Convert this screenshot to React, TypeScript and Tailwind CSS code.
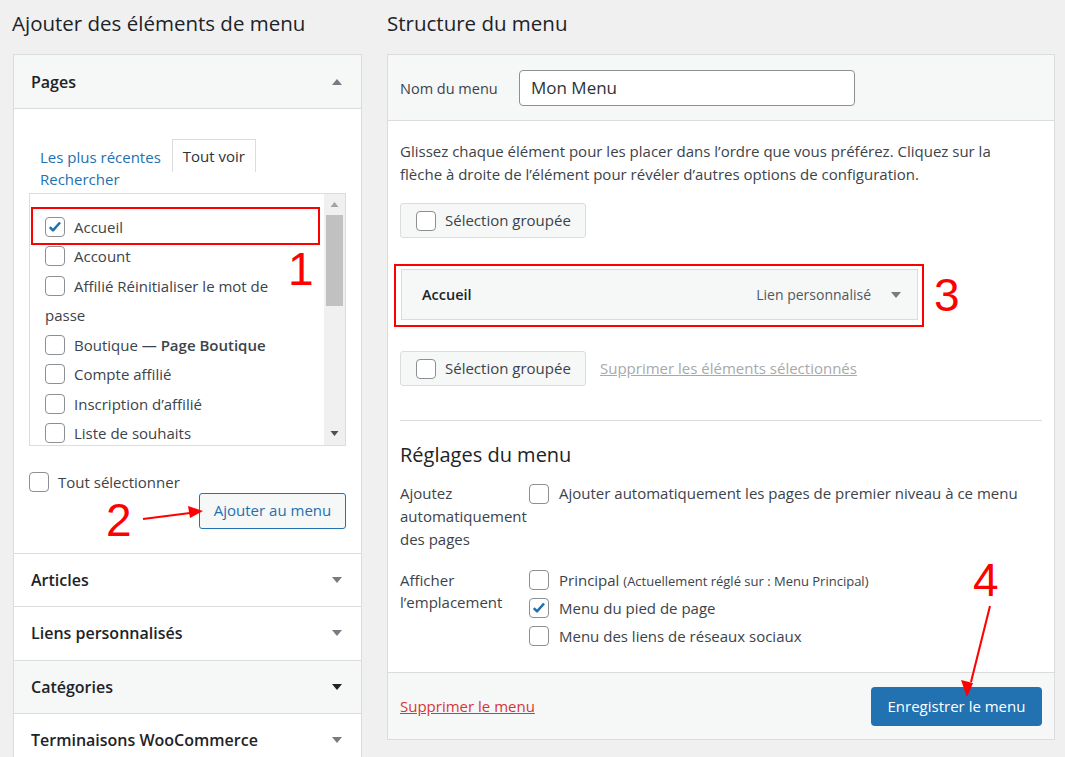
import React from 'react';

const Check = ({ checked = false }: { checked?: boolean }) => (
  <span className="inline-flex items-center justify-center w-[20px] h-[20px] shrink-0 rounded-[4px] border border-[#8c8f94] bg-white">
    {checked && (
      <svg viewBox="0 0 20 20" className="w-[18px] h-[18px]">
        <path d="M4.2 10.2l3.6 3.6L15.6 5" stroke="#2271b1" strokeWidth="2.8" fill="none" strokeLinejoin="round" />
      </svg>
    )}
  </span>
);

const Down = ({ dark = false }: { dark?: boolean }) => (
  <svg viewBox="0 0 10 6" className="w-[10px] h-[6px]">
    <path d="M0 0h10L5 6z" fill={dark ? '#1d2327' : '#787c82'} />
  </svg>
);

const pages = [
  { label: 'Accueil', checked: true },
  { label: 'Account' },
  { label: 'Affilié Réinitialiser le mot de', wrap: 'passe' },
  { label: 'Boutique — ', bold: 'Page Boutique' },
  { label: 'Compte affilié' },
  { label: 'Inscription d’affilié' },
  { label: 'Liste de souhaits' },
];

const sections = [
  { name: 'Articles' },
  { name: 'Liens personnalisés' },
  { name: 'Catégories', active: true },
  { name: 'Terminaisons WooCommerce' },
];

function AddItems() {
  return (
    <div className="w-[349px] shrink-0">
      <div className="h-[54px] pt-[8px] text-[20.5px] text-[#1d2327] -ml-[1px]">Ajouter des éléments de menu</div>
      <div className="border border-[#dcdcde] bg-white">
        <div className="h-[54px] flex items-center justify-between px-[17px] bg-[#f6f7f7] border-b border-[#dcdcde]">
          <span className="text-[16px] font-semibold text-[#1d2327]">Pages</span>
          <svg viewBox="0 0 10 6" className="w-[10px] h-[6px] mr-[2px]">
            <path d="M0 6h10L5 0z" fill="#787c82" />
          </svg>
        </div>
        <div className="px-[15px] pt-[30px] pb-[24px]">
          <div className="pl-[11px] text-[15px]">
            <div className="flex items-end h-[33px]">
              <span className="text-[#2271b1] mb-[4px] mr-[11px]">Les plus récentes</span>
              <span className="h-[33px] px-[10px] border border-b-0 border-[#dcdcde] flex items-center text-[#2c3338] bg-white">Tout voir</span>
            </div>
            <div className="text-[#2271b1] -mt-[4px] leading-[22px]">Rechercher</div>
          </div>
          <div className="relative mt-[3px] h-[253px] border border-[#dcdcde] flex overflow-hidden">
            <div className="flex-1 pl-[15px] pt-[18px] text-[15px] text-[#3c434a]">
              {pages.map((p) => (
                <div key={p.label}>
                  <div className="h-[29.5px] flex items-center gap-[9px] whitespace-nowrap">
                    <Check checked={p.checked} />
                    <span>
                      {p.label}
                      {p.bold && <span className="font-semibold">{p.bold}</span>}
                    </span>
                  </div>
                  {p.wrap && <div className="h-[29.5px] flex items-center">{p.wrap}</div>}
                </div>
              ))}
            </div>
            <div className="w-[21px] bg-[#f0f0f0] flex flex-col items-center">
              <svg viewBox="0 0 8 5" className="w-[9px] h-[5px] mt-[8px]">
                <path d="M0 5h8L4 0z" fill="#a3a3a3" />
              </svg>
              <div className="w-[17px] h-[91px] bg-[#c1c1c1] mt-[8px]" />
              <div className="flex-1" />
              <svg viewBox="0 0 8 5" className="w-[9px] h-[5px] mb-[9px]">
                <path d="M0 0h8L4 5z" fill="#505050" />
              </svg>
            </div>
            <div className="absolute left-[1px] top-[13px] w-[289px] h-[38px] border-2 border-[#ff0000]" />
            <span className="absolute left-[258px] top-[52px] text-[46px] leading-none text-[#ff0000] font-['Liberation_Sans',sans-serif]">1</span>
          </div>
          <div className="mt-[25px] flex items-center gap-[9px] text-[15px] text-[#3c434a]">
            <Check />
            <span>Tout sélectionner</span>
          </div>
          <div className="flex justify-end -mt-[1px]">
            <button className="h-[36px] w-[147px] rounded-[3px] border border-[#2271b1] bg-[#f6f7f7] text-[15px] text-[#2271b1]">
              Ajouter au menu
            </button>
          </div>
        </div>
        {sections.map((s) => (
          <div
            key={s.name}
            className={`h-[53.5px] flex items-center justify-between px-[17px] border-t border-[#dcdcde] ${s.active ? 'bg-[#f6f7f7]' : 'bg-white'}`}
          >
            <span className="text-[16px] font-semibold text-[#1d2327]">{s.name}</span>
            <span className="mr-[2px]">
              <Down dark={s.active} />
            </span>
          </div>
        ))}
      </div>
    </div>
  );
}

function GroupSelect() {
  return (
    <div className="h-[35px] w-[186px] flex items-center gap-[9px] pl-[15px] bg-[#f6f7f7] border border-[#dcdcde] rounded-[3px] text-[15px] text-[#3c434a]">
      <Check />
      <span>Sélection groupée</span>
    </div>
  );
}

function MenuStructure() {
  return (
    <div className="w-[668px] shrink-0">
      <div className="h-[54px] pt-[8px] text-[20.5px] text-[#1d2327]">Structure du menu</div>
      <div className="border border-[#dcdcde] bg-white">
        <div className="h-[66px] flex items-center px-[12px] bg-[#f6f7f7] border-b border-[#dcdcde]">
          <span className="w-[119px] text-[14.5px] text-[#3c434a] pt-[3px]">Nom du menu</span>
          <div className="h-[36px] w-[336px] flex items-center px-[11px] rounded-[4px] border border-[#8c8f94] bg-white text-[17px] text-[#2c3338]">
            Mon Menu
          </div>
        </div>
        <div className="px-[12px] pt-[19px] pb-[22px]">
          <p className="text-[15px] leading-[23px] text-[#3c434a]">
            Glissez chaque élément pour les placer dans l’ordre que vous préférez. Cliquez sur la
            <br />
            flèche à droite de l’élément pour révéler d’autres options de configuration.
          </p>
          <div className="mt-[17px]">
            <GroupSelect />
          </div>
          <div className="relative mt-[31px] w-[517px] h-[51px] ml-[1px]">
            <div className="h-full flex items-center justify-between pl-[20px] pr-[16px] bg-[#f6f7f7] border border-[#dcdcde]">
              <span className="text-[14.5px] font-semibold text-[#1d2327]">Accueil</span>
              <span className="flex items-center gap-[20px] text-[14px] text-[#50575e]">
                Lien personnalisé
                <Down />
              </span>
            </div>
            <div className="absolute -left-[7px] -top-[5px] -right-[6px] -bottom-[7px] border-2 border-[#ff0000]" />
            <span className="absolute left-[533px] top-[3px] text-[46px] leading-none text-[#ff0000] font-['Liberation_Sans',sans-serif]">3</span>
          </div>
          <div className="mt-[31px] flex items-center gap-[14px]">
            <GroupSelect />
            <span className="text-[15px] text-[#a7aaad] underline">Supprimer les éléments sélectionnés</span>
          </div>
          <div className="mt-[34px] border-t border-[#dcdcde]" />
          <h3 className="mt-[22px] text-[20px] leading-[24px] text-[#1d2327]">Réglages du menu</h3>
          <div className="mt-[15px] grid grid-cols-[129px_1fr] gap-y-[18px] text-[15px] text-[#3c434a]">
            <div className="leading-[23px]">
              Ajoutez
              <br />
              automatiquement
              <br />
              des pages
            </div>
            <div className="flex gap-[10px] h-[23px] items-center">
              <Check />
              <span>Ajouter automatiquement les pages de premier niveau à ce menu</span>
            </div>
            <div className="leading-[22px]">
              Afficher
              <br />
              l’emplacement
            </div>
            <div className="flex flex-col">
              <div className="flex items-center gap-[10px] h-[22px]">
                <Check />
                <span>
                  Principal <span className="text-[13px]">(Actuellement réglé sur : Menu Principal)</span>
                </span>
              </div>
              <div className="flex items-center gap-[10px] h-[28px] mt-[3px]">
                <Check checked />
                <span>Menu du pied de page</span>
              </div>
              <div className="flex items-center gap-[10px] h-[28px]">
                <Check />
                <span>Menu des liens de réseaux sociaux</span>
              </div>
            </div>
          </div>
        </div>
        <div className="h-[67px] flex items-center justify-between px-[12px] bg-[#f6f7f7] border-t border-[#dcdcde]">
          <span className="text-[15px] text-[#d63638] underline">Supprimer le menu</span>
          <button className="h-[39px] w-[171px] rounded-[4px] bg-[#2271b1] text-white text-[15px]">Enregistrer le menu</button>
        </div>
      </div>
    </div>
  );
}

export default function App() {
  return (
    <div className="relative w-[1065px] h-[757px] overflow-hidden bg-[#f0f0f1] font-['Open_Sans',sans-serif]">
      <div className="flex gap-[25px] pl-[13px]">
        <AddItems />
        <MenuStructure />
      </div>
      <span className="absolute left-[106px] top-[497px] text-[46px] leading-none text-[#ff0000] font-['Liberation_Sans',sans-serif]">2</span>
      <span className="absolute left-[973px] top-[557px] text-[46px] leading-none text-[#ff0000] font-['Liberation_Sans',sans-serif]">4</span>
      <svg className="absolute inset-0 pointer-events-none" width="1065" height="757">
        <line x1="143" y1="519" x2="190" y2="513" stroke="#ff0000" strokeWidth="2" />
        <path d="M203 511l-15 -5l2 12z" fill="#ff0000" />
        <line x1="990" y1="606" x2="971" y2="682" stroke="#ff0000" strokeWidth="2" />
        <path d="M967 697l-6 -17l12 3z" fill="#ff0000" />
      </svg>
    </div>
  );
}
